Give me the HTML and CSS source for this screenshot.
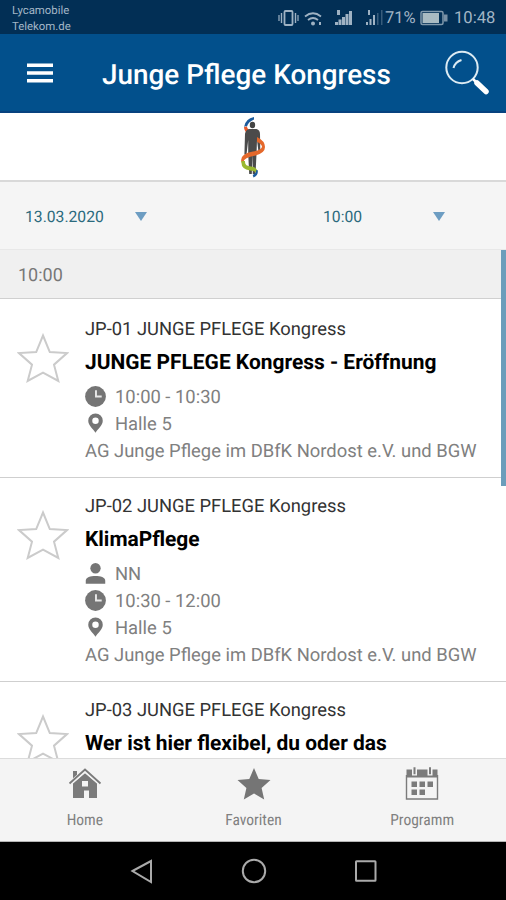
FILE: index.html
```
<!DOCTYPE html>
<html lang="de">
<head>
    <meta charset="UTF-8">
    <meta name="viewport" content="width=device-width, initial-scale=1.0">
    <title>Junge Pflege Kongress</title>
    <link rel="stylesheet" href="styles.css">
</head>
<body>
    <!-- icons used more than once -->
    <svg class="sprite" width="0" height="0">
        <symbol id="star" viewBox="0 0 52 50"><path d="M26 2.5l6.8 16.6 17.2 1-13 11.6 4.3 16.2L26 39.6 10.7 47.9 15 31.7 2 20.1l17.2-1z"/></symbol>
        <symbol id="clock" viewBox="0 0 22 22"><circle cx="11" cy="11" r="10.9"/><path d="M11.500 4.500V11h6" fill="none" stroke="#e8e8e8" stroke-width="2"/></symbol>
        <symbol id="pin" viewBox="0 0 22 22"><path fill-rule="evenodd" d="M11 .5a7.600 7.600 0 0 0-7.600 7.600c0 5 5 8.400 7.600 12.500 2.600-4.100 7.600-7.500 7.600-12.500A7.600 7.600 0 0 0 11 .5zm0 4.200a3.400 3.400 0 1 1 0 6.800 3.400 3.400 0 0 1 0-6.800z"/></symbol>
        <symbol id="person" viewBox="0 0 22 22"><circle cx="11" cy="5.500" r="5.400"/><path d="M.8 21.800v-3.300c0-3.800 5-5 10.200-5s10.200 1.200 10.200 5v3.300z"/></symbol>
    </svg>

    <div class="statusbar">
        <div class="carriers"><span>Lycamobile</span><span>Telekom.de</span></div>
        <svg class="status-icons" width="106" height="24" viewBox="0 0 106 24">
            <g fill="none" stroke="#9fb2c3" stroke-width="1.8">
                <rect x="6.500" y="5" width="8" height="14" rx="1"/>
                <path d="M3.500 7v10M17.500 7v10" stroke-width="1.400"/>
                <path d="M1 9v6M20 9v6" stroke-width="1.200"/>
                <path d="M27 10.500q8-6.500 16 0M30 14q5-4 10 0" />
            </g>
            <g fill="#9fb2c3">
                <circle cx="35" cy="17.500" r="2"/><path d="M41 16h2v3h-2z"/>
                <path d="M57 16h3v3h-3zM60.500 13.500h3V19h-3zM64 11h3v8h-3zM67.500 8h3v11h-3zM71 5h3v14h-3zM59 4h3v5h-3z"/>
                <path d="M88 16h2v3h-2zM91.500 13h2v6h-2zM95 9h2v10h-2zM90 4h2v5h-2z"/>
                <path d="M99 7h1.500v12H99zM103 4h1.500v15H103z" opacity=".35"/>
            </g>
        </svg>
        <span class="battery-level">71%</span>
        <svg class="battery" width="28" height="16" viewBox="0 0 28 16">
            <rect x="1" y="1.500" width="22" height="13" rx="1.500" fill="none" stroke="#8099ac" stroke-width="1.500"/>
            <path d="M2.500 3h16.500v10H2.500z" fill="#a9bbc2"/><path d="M24 4.500h3.500v7H24z" fill="#7890a5"/>
        </svg>
        <span class="clock">10:48</span>
    </div>

    <header class="header">
        <svg class="menu-icon" width="28" height="22" viewBox="0 0 28 22"><path d="M1 3.300h26M1 11h26M1 18.700h26" stroke="#fff" stroke-width="3.500"/></svg>
        <h1>Junge Pflege Kongress</h1>
        <svg class="search-icon" width="46" height="46" viewBox="0 0 46 46" fill="none" stroke="#fff">
            <circle cx="18" cy="17.500" r="15.700" stroke="#dcebf3" stroke-width="2"/>
            <path d="M9.500 18q1.500-6 8-8" stroke="#dcebf3" stroke-width="2"/>
            <path d="M29 29l3.500 3.500" stroke-width="2.500"/>
            <path d="M33 33l9 8.500" stroke-width="5.500" stroke-linecap="round"/>
        </svg>
    </header>

    <div class="logo">
        <svg width="30" height="64" viewBox="0 0 30 64">
            <path d="M15 3Q6.500 4.500 5 13q1-1 3-.5Q9 8 15 5.500z" fill="#1c5b9d"/>
            <path d="M5 13q0 5 5 7l1.500-3.500Q8 15 8 12.500z" fill="#e8592b"/>
            <ellipse cx="13.500" cy="11" rx="2.700" ry="3.200" fill="#444"/>
            <path d="M10 15h7.500q3.500 1 3.500 5l.3 17h-1.900L18 26l-.5 14-1 20h-2.700l-.4-20-.6 20h-2.600L9.200 40V26L7.500 40.500H5.400L6 20q.5-4 4-5z" fill="#4b4b4b"/>
            <path d="M18 23q8 4 8 10 0 6-9.500 8.500Q4.500 43.500 4.500 48l-2 .5Q0 40 14 37.500 23 36 23 32.500q-1-3-5-4.500z" fill="#e4682b"/>
            <path d="M2.500 47q-1 8 8.500 9.500 6 .5 6.500 3l1-2.500q-1-4-6.500-4.500-6.500-.5-6-5.500z" fill="#9ab831"/>
            <path d="M18.500 56q1.500 5-4 7.500l-.8-2.500q4-2 3.500-5z" fill="#1c5b9d"/>
        </svg>
    </div>

    <div class="filters">
        <div class="filter date"><span>13.03.2020</span><i class="arrow"></i></div>
        <div class="filter time"><span>10:00</span><i class="arrow"></i></div>
    </div>

    <main class="program">
        <div class="section-title">10:00</div>
        <div class="sessions">
            <article class="session">
                <svg class="fav"><use href="#star"/></svg>
                <div class="session-body">
                    <div class="code">JP-01 JUNGE PFLEGE Kongress</div>
                    <h2>JUNGE PFLEGE Kongress - Eröffnung</h2>
                    <div class="info"><svg class="icon"><use href="#clock"/></svg><span>10:00 - 10:30</span></div>
                    <div class="info"><svg class="icon"><use href="#pin"/></svg><span>Halle 5</span></div>
                    <div class="info"><span>AG Junge Pflege im DBfK Nordost e.V. und BGW</span></div>
                </div>
            </article>
            <article class="session">
                <svg class="fav"><use href="#star"/></svg>
                <div class="session-body">
                    <div class="code">JP-02 JUNGE PFLEGE Kongress</div>
                    <h2>KlimaPflege</h2>
                    <div class="info"><svg class="icon"><use href="#person"/></svg><span>NN</span></div>
                    <div class="info"><svg class="icon"><use href="#clock"/></svg><span>10:30 - 12:00</span></div>
                    <div class="info"><svg class="icon"><use href="#pin"/></svg><span>Halle 5</span></div>
                    <div class="info"><span>AG Junge Pflege im DBfK Nordost e.V. und BGW</span></div>
                </div>
            </article>
            <article class="session">
                <svg class="fav"><use href="#star"/></svg>
                <div class="session-body">
                    <div class="code">JP-03 JUNGE PFLEGE Kongress</div>
                    <h2>Wer ist hier flexibel, du oder das</h2>
                </div>
            </article>
        </div>
        <div class="scrollbar"></div>
    </main>

    <nav class="tabs">
        <a class="tab">
            <svg width="34" height="34" viewBox="0 0 34 34" fill="#7b7b7b">
                <path fill-rule="evenodd" d="M5 16L17 6l12 10v15h-8v-7.500h-5V31H5zM14 14v5.500h6V14z"/>
                <path d="M5 4h4v6l-4 4z"/><path d="M1.500 17L17 3.500 32.500 17" fill="none" stroke="#f4f4f4" stroke-width="4"/>
                <path d="M1.500 16.500L17 2.500 32.500 16.500" fill="none" stroke="#7b7b7b" stroke-width="1.800"/>
            </svg>
            <span>Home</span>
        </a>
        <a class="tab">
            <svg width="34" height="34" viewBox="0 0 34 34" fill="#757575"><path d="M17 1l4.700 11 11.800 1.100-8.900 7.900 2.600 11.500L17 26.400 6.800 32.500 9.400 21 .5 13.100 12.300 12z"/></svg>
            <span>Favoriten</span>
        </a>
        <a class="tab">
            <svg width="34" height="34" viewBox="0 0 34 34" fill="#7b7b7b">
                <path d="M1.500 2.500h31V10.500h-31z"/>
                <path d="M1.500 8v24h31V8" fill="none" stroke="#7b7b7b" stroke-width="1.400"/>
                <path d="M9.500 0v8.500M25 0v8.500" stroke="#f4f4f4" stroke-width="5"/>
                <path d="M9.500 .3v7M25 .3v7" stroke="#7b7b7b" stroke-width="2"/>
                <path d="M6.500 14.500h5.500v5.500H6.500zM14.500 14.500H20v5.500h-5.500zM22.500 14.500H28v5.500h-5.500zM6.500 22.500h5.500V28H6.500zM14.500 22.500H20V28h-5.500z"/>
            </svg>
            <span>Programm</span>
        </a>
    </nav>

    <div class="navbar">
        <svg width="24" height="26" viewBox="0 0 24 26"><path d="M2.500 13L21 3v21z"/></svg>
        <svg width="26" height="26" viewBox="0 0 26 26"><circle cx="13" cy="13" r="11.200"/></svg>
        <svg width="24" height="26" viewBox="0 0 24 26"><rect x="2" y="3.300" width="19.500" height="19.500" rx=".5"/></svg>
    </div>
</body>
</html>
```

FILE: styles.css
```
* {
    box-sizing: border-box;
}

body {
    margin: 0;
    width: 506px;
    height: 900px;
    display: flex;
    flex-direction: column;
    overflow: hidden;
    background: #fff;
    font-family: Roboto, "Liberation Sans", sans-serif;
    text-rendering: geometricPrecision;
}

svg {
    display: block;
    flex: none;
}

.sprite {
    position: absolute;
}

/* phone status bar */
.statusbar {
    height: 34px;
    flex: none;
    display: flex;
    align-items: center;
    padding: 2px 11px 0 12px;
    background: #022f55;
    color: #a3b6c6;
}

.carriers {
    display: flex;
    flex-direction: column;
    font-size: 11.4px;
    line-height: 15.5px;
    margin-right: auto;
    padding-top: 1px;
}

.battery-level {
    width: 31px;
    margin-left: 1px;
    font-size: 16.5px;
    white-space: nowrap;
}

.battery {
    margin: 0 6px 1px 4px;
}

.clock {
    font-size: 16.6px;
    width: 41px;
}

.header {
    height: 79px;
    flex: none;
    display: flex;
    align-items: center;
    padding: 0 16px 0 26px;
    background: #02508c;
    border-bottom: 2px solid #07427f;
    color: #fff;
}

.header h1 {
    margin: 4px auto 0 48px;
    font-size: 27.9px;
    font-weight: 500;
    white-space: nowrap;
}

.logo {
    height: 69px;
    flex: none;
    display: flex;
    justify-content: center;
    padding: 1px 0 0 1px;
    border-bottom: 2px solid #d9d9d9;
}

/* date and time selection */
.filters {
    height: 67px;
    flex: none;
    display: flex;
    background: #f5f5f5;
    color: #2b6a7d;
    font-size: 15.7px;
}

.filter {
    display: flex;
    align-items: center;
    padding-top: 1px;
}

.date {
    width: 298px;
    padding-left: 25px;
}

.date span {
    width: 110px;
}

.time {
    padding-left: 25px;
}

.time span {
    width: 110px;
}

.arrow {
    border: 6.5px solid transparent;
    border-top: 9px solid #6d9dc2;
    border-bottom: 0;
}

.program {
    position: relative;
    flex: 1;
    min-height: 0;
    overflow: hidden;
}

.section-title {
    height: 50px;
    padding-left: 18px;
    line-height: 52px;
    font-size: 18px;
    color: #777;
    background: #f0f0f0;
    border-top: 1px solid #e8e8e8;
    border-bottom: 1px solid #d0d0d0;
}

.sessions {
    padding-top: 2px;
}

.session {
    display: flex;
    padding: 14px 0 13px;
    border-bottom: 1px solid #cfcfcf;
}

.fav {
    width: 52px;
    height: 50px;
    margin: 18px 16px 0 17px;
    fill: none;
    stroke: #cbcbcb;
    stroke-width: 2px;
}

.code {
    height: 27px;
    line-height: 29px;
    font-size: 18.35px;
    color: #333;
    white-space: nowrap;
}

.session h2 {
    height: 41px;
    margin: 0;
    line-height: 43px;
    font-size: 20.95px;
    font-weight: 700;
    color: #000;
    white-space: nowrap;
}

.info {
    display: flex;
    align-items: center;
    height: 27px;
    font-size: 18.4px;
    color: #808080;
    white-space: nowrap;
}

.info span {
    padding-top: 2px;
}

.icon {
    width: 21px;
    height: 21px;
    margin-right: 9px;
    fill: #757575;
}

.scrollbar {
    position: absolute;
    top: 1px;
    right: 0;
    width: 5px;
    height: 236px;
    background: #6c9dbb;
}

/* bottom navigation */
.tabs {
    height: 84px;
    flex: none;
    display: flex;
    background: #f4f4f4;
    border-top: 1px solid #dcdcdc;
    border-bottom: 1px solid #b5b5b5;
}

.tab {
    flex: 1;
    display: flex;
    flex-direction: column;
    align-items: center;
    padding: 8px 0 0 1px;
    font-size: 15.5px;
    line-height: 20px;
    color: #808080;
}

.tab span {
    margin-top: 9px;
    font-stretch: 85%;
}

.navbar {
    height: 58px;
    flex: none;
    display: flex;
    justify-content: center;
    align-items: center;
    gap: 87px;
    padding-left: 1px;
    background: #000;
    fill: none;
    stroke: #aaa;
    stroke-width: 2px;
}
```
